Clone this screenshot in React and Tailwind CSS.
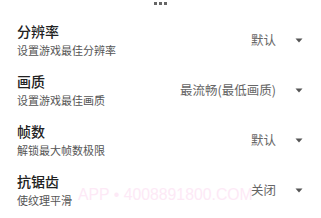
const rows = [
  { title: '分辨率', desc: '设置游戏最佳分辨率', value: '默认' },
  { title: '画质', desc: '设置游戏最佳画质', value: '最流畅(最低画质)' },
  { title: '帧数', desc: '解锁最大帧数极限', value: '默认' },
  { title: '抗锯齿', desc: '使纹理平滑', value: '关闭' },
];

function Caret() {
  return (
    <svg width="8" height="5" viewBox="0 0 8 5" className="shrink-0">
      <path d="M0.5 0.5 L7.5 0.5 L4 4.5 Z" fill="#555" />
    </svg>
  );
}

export default function App() {
  return (
    <div
      className="relative w-[321px] h-[218px] overflow-hidden bg-white"
      style={{ fontFamily: '"Noto Sans CJK SC", "Noto Sans", sans-serif' }}
    >
      <div
        className="absolute left-[78px] top-[186px] text-[15.8px] leading-[18px] text-[#fde9f6] whitespace-nowrap pointer-events-none"
        style={{ fontFamily: '"Liberation Sans", sans-serif' }}
      >
        APP • 4008891800.COM
      </div>
      <div className="relative">
        <div className="flex justify-center gap-[2px] pt-[2px] h-[15px]">
          <span className="w-[3px] h-[3px] bg-[#666]" />
          <span className="w-[3px] h-[3px] bg-[#666]" />
          <span className="w-[3px] h-[3px] bg-[#666]" />
        </div>
        {rows.map((r) => (
          <div key={r.title} className="flex items-center justify-between h-[50px] pl-[17px] pr-[18px]">
            <div className="flex flex-col">
              <span className="text-[14px] leading-[21px] font-medium text-[#222]">{r.title}</span>
              <span className="text-[11px] leading-[17px] text-[#555]">{r.desc}</span>
            </div>
            <div className="flex items-center gap-[19px]">
              <span className="text-[12.5px] text-[#666]">{r.value}</span>
              <Caret />
            </div>
          </div>
        ))}
      </div>
    </div>
  );
}
